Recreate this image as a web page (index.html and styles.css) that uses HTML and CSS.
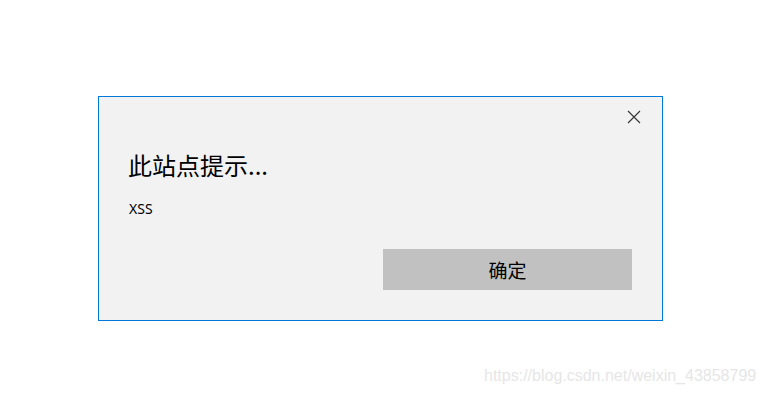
FILE: index.html
```html
<!DOCTYPE html>
<html lang="zh-CN">
<head>
<meta charset="utf-8">
<title>此站点提示</title>
<link rel="stylesheet" href="styles.css">
</head>
<body>
<div class="page">
  <div class="dialog">
    <div class="topbar">
      <button class="close" aria-label="关闭">
        <svg width="14" height="14" viewBox="0 0 14 14"><path d="M1 1 L13 13 M13 1 L1 13" stroke="#333" stroke-width="1.1" fill="none"/></svg>
      </button>
    </div>
    <div class="title">此站点提示...</div>
    <div class="message">XSS</div>
    <div class="actions">
      <button class="ok">确定</button>
    </div>
  </div>
</div>
<div class="watermark">https://blog.csdn.net/weixin_43858799</div>
</body>
</html>
```
FILE: styles.css
```css
html, body {
  margin: 0;
  padding: 0;
  background: #ffffff;
  width: 765px;
  height: 396px;
  overflow: hidden;
}
.page {
  padding: 96px 0 0 98px;
}
.dialog {
  box-sizing: border-box;
  width: 565px;
  height: 225px;
  border: 1px solid #0078d7;
  background: #f2f2f2;
  padding: 0 30px 30px 30px;
  display: flex;
  flex-direction: column;
}
.topbar {
  display: flex;
  justify-content: flex-end;
  height: 56px;
  margin-right: -9px;
}
.close {
  border: 0;
  background: transparent;
  padding: 0;
  margin-top: 13px;
  width: 14px;
  height: 14px;
  display: flex;
}
.title {
  font-family: "Noto Sans CJK SC", sans-serif;
  font-weight: 400;
  font-size: 24px;
  line-height: 24px;
  color: #000;
  margin-left: -1px;
}
.message {
  font-family: "Noto Sans", sans-serif;
  font-size: 14px;
  line-height: 15px;
  color: #000;
  margin-top: 24px;
}
.actions {
  margin-top: auto;
  display: flex;
  justify-content: flex-end;
}
.ok {
  width: 249px;
  height: 41px;
  border: 0;
  background: #c1c1c1;
  font-family: "Noto Sans CJK SC", sans-serif;
  font-size: 19px;
  color: #000;
  padding: 0;
}
.watermark {
  position: absolute;
  left: 484px;
  top: 367px;
  font-family: "Liberation Sans", Arial, sans-serif;
  font-size: 16px;
  color: #e6e6e6;
  white-space: nowrap;
}
```
